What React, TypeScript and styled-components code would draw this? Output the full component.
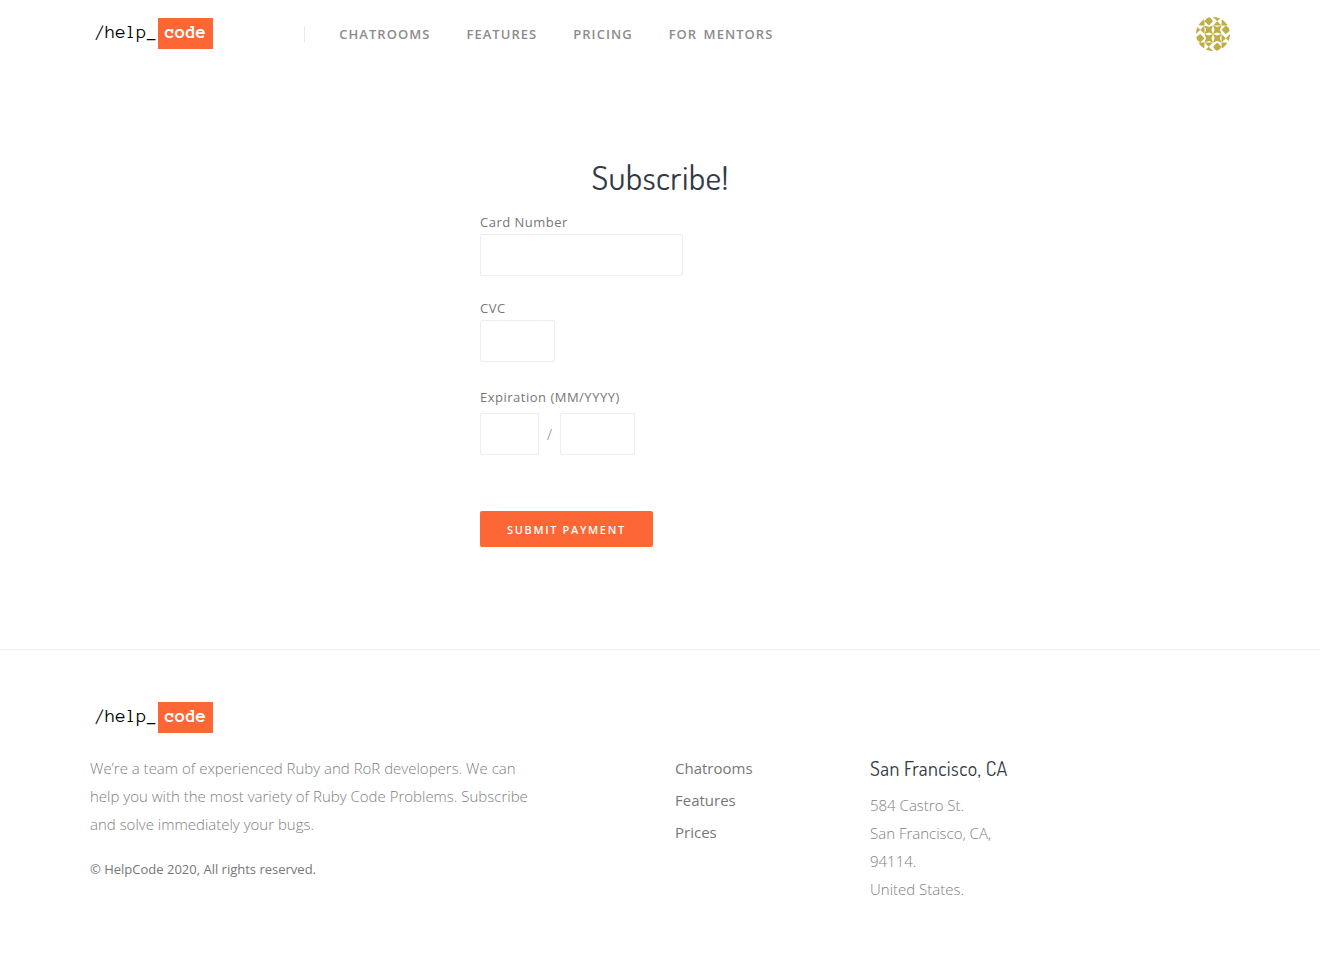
import React from "react";
import styled, { createGlobalStyle } from "styled-components";

const GlobalStyle = createGlobalStyle`
  *, *::before, *::after { box-sizing: border-box; }
  body {
    margin: 0;
    background: #fff;
    color: #808080;
    font-family: "Open Sans", "Noto Sans", sans-serif;
    font-size: 15px;
    font-weight: 300;
    line-height: 28px;
  }
  a { color: inherit; text-decoration: none; }
  p, h1, h2, ul { margin: 0; padding: 0; }
  ul { list-style: none; }
`;

const Container = styled.div`
  width: 100%;
  max-width: 1170px;
  margin: 0 auto;
  padding: 0 15px;
`;

const HeaderBar = styled(Container)`
  display: flex;
  align-items: center;
  height: 68px;
`;

const LogoLink = styled.a`
  display: inline-flex;
  align-items: flex-start;
  padding: 0 0 1px 5px;
  color: #000;
  font-family: "Anonymous Pro", "Liberation Mono", monospace;
  font-size: 19px;
  font-weight: 400;
  line-height: 27px;
`;

const LogoBadge = styled.span`
  width: 55px;
  height: 31px;
  margin-left: 1px;
  background: #fd6635;
  color: #fff;
  font-weight: 700;
  text-align: center;
`;

const Nav = styled.nav`
  display: flex;
  align-items: center;
  flex: 1;
  gap: 36px;
  margin-left: 91px;

  &::before {
    content: "";
    width: 1px;
    height: 16px;
    margin-right: -2px;
    background: #ebebeb;
  }
`;

const NavLink = styled.a`
  color: #8c8c8c;
  font-size: 13px;
  font-weight: 600;
  letter-spacing: 0.08em;
  word-spacing: 2px;
  text-transform: uppercase;
`;

const AvatarLink = styled.a`
  display: flex;
`;

const Main = styled.main`
  padding: 88px 15px 102px;
`;

const Form = styled.form`
  display: flex;
  flex-direction: column;
  align-items: flex-start;
  width: 100%;
  max-width: 360px;
  margin: 0 auto;
`;

const Title = styled.h1`
  align-self: center;
  margin-bottom: 14px;
  color: #323a45;
  font-family: Dosis, Lato, sans-serif;
  font-size: 34px;
  font-weight: 400;
  letter-spacing: 0.01em;
  line-height: 42px;
`;

const Field = styled.div`
  display: flex;
  flex-direction: column;
  margin-bottom: 22px;
`;

const Label = styled.label`
  color: #777;
  font-size: 13px;
  font-weight: 400;
  letter-spacing: 0.5px;
  line-height: 20px;
  margin-bottom: 2px;
`;

const Input = styled.input<{ $width: number }>`
  width: ${(p) => p.$width}px;
  height: 42px;
  padding: 8px 12px;
  border: 1px solid #e8eef2;
  border-radius: 2px;
  background: #fff;
  color: #555;
  font: inherit;
`;

const Expiration = styled.fieldset`
  min-width: 0;
  margin: 3px 0 56px;
  padding: 0;
  border: 0;
`;

const Legend = styled.legend`
  padding: 0;
  margin-bottom: 6px;
  color: #777;
  font-size: 13px;
  font-weight: 400;
  letter-spacing: 0.5px;
  line-height: 20px;
`;

const DateRow = styled.div`
  display: flex;
  align-items: center;
  gap: 8px;
`;

const SubmitButton = styled.button`
  height: 36px;
  padding: 0 27px;
  border: 0;
  border-radius: 2px;
  background: #fd6635;
  color: #fff;
  font-family: inherit;
  font-size: 11px;
  font-weight: 600;
  letter-spacing: 0.15em;
  text-transform: uppercase;
  cursor: pointer;
`;

const FooterBar = styled.footer`
  padding: 52px 0 56px;
  border-top: 1px solid #eee;
`;

const FooterGrid = styled.div`
  display: grid;
  grid-template-columns: 6fr 2fr 4fr;
  margin: 20px -30px 0 0;
`;

const About = styled.div`
  max-width: 450px;
`;

const Copyright = styled.p`
  margin-top: 17px;
  color: #777;
  font-size: 13px;
  font-weight: 400;
`;

const FooterLinks = styled.ul`
  display: flex;
  flex-direction: column;
  gap: 4px;
  color: #777;
  font-weight: 400;
`;

const City = styled.h2`
  margin-bottom: 9px;
  color: #323a45;
  font-family: Dosis, Lato, sans-serif;
  font-size: 20px;
  font-weight: 400;
  letter-spacing: 0.02em;
  line-height: 28px;
`;

const Address = styled.address`
  font-style: normal;
`;

const Logo = () => (
  <LogoLink href="#home">
    /help_<LogoBadge>code</LogoBadge>
  </LogoLink>
);

const Avatar = () => (
  <svg width="34" height="34" viewBox="0 0 32 32" role="img" aria-label="Account">
    <defs>
      <clipPath id="round"><circle cx="16" cy="16" r="16" /></clipPath>
      <path id="star" d="M0 0L4 1.5L8 0L6.5 4L8 8L4 6.5L0 8L1.5 4Z" />
    </defs>
    <g clipPath="url(#round)" fill="#bfae45">
      {[[8, 8], [16, 8], [8, 16], [16, 16]].map(([x, y]) => (
        <use key={`${x}-${y}`} href="#star" x={x} y={y} />
      ))}
      {[0, 90, 180, 270].map((a) => (
        <g key={a} transform={`rotate(${a} 16 16)`}>
          <path d="M4 4L7 1L8 4V8H4L1 7ZM8 4L11 0H13L16 4L12 8ZM16 0H24L20 4ZM16 8L20 4L24 8Z" />
        </g>
      ))}
    </g>
  </svg>
);

const navItems = ["Chatrooms", "Features", "Pricing", "For Mentors"];
const footerItems = ["Chatrooms", "Features", "Prices"];

export default function App() {
  return (
    <>
      <GlobalStyle />
      <header>
        <HeaderBar>
          <Logo />
          <Nav>
            {navItems.map((item) => (
              <NavLink key={item} href="#nav">{item}</NavLink>
            ))}
          </Nav>
          <AvatarLink href="#account"><Avatar /></AvatarLink>
        </HeaderBar>
      </header>
      <Main>
        <Form onSubmit={(e) => e.preventDefault()}>
          <Title>Subscribe!</Title>
          <Field>
            <Label htmlFor="card">Card Number</Label>
            <Input id="card" $width={203} />
          </Field>
          <Field>
            <Label htmlFor="cvc">CVC</Label>
            <Input id="cvc" $width={75} />
          </Field>
          <Expiration>
            <Legend>Expiration (MM/YYYY)</Legend>
            <DateRow>
              <Input aria-label="Expiration month" $width={59} />
              <span>/</span>
              <Input aria-label="Expiration year" $width={75} />
            </DateRow>
          </Expiration>
          <SubmitButton type="submit">Submit Payment</SubmitButton>
        </Form>
      </Main>
      <FooterBar>
        <Container>
          <Logo />
          <FooterGrid>
            <About>
              <p>
                We’re a team of experienced Ruby and RoR developers. We can help you with the most
                variety of Ruby Code Problems. Subscribe and solve immediately your bugs.
              </p>
              <Copyright>© HelpCode 2020, All rights reserved.</Copyright>
            </About>
            <FooterLinks>
              {footerItems.map((item) => (
                <li key={item}><a href="#page">{item}</a></li>
              ))}
            </FooterLinks>
            <div>
              <City>San Francisco, CA</City>
              <Address>
                584 Castro St.<br />San Francisco, CA,<br />94114.<br />United States.
              </Address>
            </div>
          </FooterGrid>
        </Container>
      </FooterBar>
    </>
  );
}
